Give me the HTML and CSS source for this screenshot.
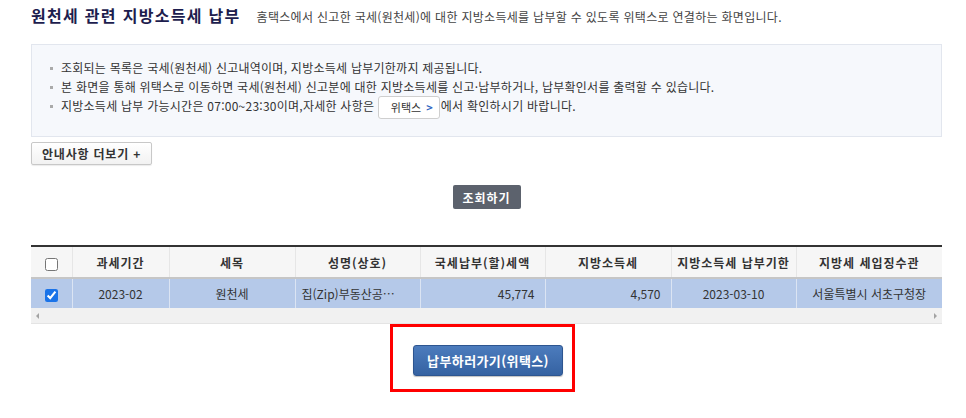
FILE: index.html
```html
<!DOCTYPE html>
<html lang="ko">
<head>
    <meta charset="UTF-8">
    <meta name="viewport" content="width=device-width, initial-scale=1.0">
    <title>원천세 관련 지방소득세 납부</title>
    <link rel="stylesheet" href="styles.css">
</head>
<body>
    <div class="pagina">
        <div class="titulo">
            <h1>원천세 관련 지방소득세 납부</h1>
            <p class="descripcion">홈택스에서 신고한 국세(원천세)에 대한 지방소득세를 납부할 수 있도록 위택스로 연결하는 화면입니다.</p>
        </div>

        <div class="caja-info">
            <ul>
                <li>조회되는 목록은 국세(원천세) 신고내역이며, 지방소득세 납부기한까지 제공됩니다.</li>
                <li>본 화면을 통해 위택스로 이동하면 국세(원천세) 신고분에 대한 지방소득세를 신고·납부하거나, 납부확인서를 출력할 수 있습니다.</li>
                <li>지방소득세 납부 가능시간은 07:00~23:30이며,자세한 사항은 <a class="btn-wetax" href="#">위택스 <span class="flecha">&gt;</span></a>에서 확인하시기 바랍니다.</li>
            </ul>
        </div>

        <button class="btn-mas">안내사항 더보기 +</button>

        <div class="centro">
            <button class="btn-buscar">조회하기</button>
        </div>

        <div class="tabla-wrap">
            <table class="tabla">
                <colgroup>
                    <col style="width:41px">
                    <col style="width:97px">
                    <col style="width:126px">
                    <col style="width:125px">
                    <col style="width:125px">
                    <col style="width:126px">
                    <col style="width:125px">
                    <col style="width:146px">
                </colgroup>
                <thead>
                    <tr>
                        <th><input type="checkbox"></th>
                        <th>과세기간</th>
                        <th>세목</th>
                        <th>성명(상호)</th>
                        <th>국세납부(할)세액</th>
                        <th>지방소득세</th>
                        <th>지방소득세 납부기한</th>
                        <th>지방세 세입징수관</th>
                    </tr>
                </thead>
                <tbody>
                    <tr class="seleccionada">
                        <td><input type="checkbox" checked></td>
                        <td>2023-02</td>
                        <td>원천세</td>
                        <td class="izq">집(Zip)부동산공…</td>
                        <td class="der">45,774</td>
                        <td class="der">4,570</td>
                        <td>2023-03-10</td>
                        <td>서울특별시 서초구청장</td>
                    </tr>
                </tbody>
            </table>
            <div class="scroll">
                <span class="tri-izq"></span>
                <span class="tri-der"></span>
            </div>
        </div>

        <div class="centro pie">
            <div class="marco-rojo">
                <button class="btn-pagar">납부하러가기(위택스)</button>
            </div>
        </div>
    </div>
</body>
</html>
```

FILE: styles.css
```css
* {
    margin: 0;
    padding: 0;
    box-sizing: border-box;
    font-family: "Noto Sans CJK KR", "Liberation Sans", sans-serif;
}

body {
    background: #ffffff;
    color: #333333;
}

.pagina {
    width: 911px;
    margin-left: 31px;
}

.titulo {
    display: flex;
    align-items: baseline;
    gap: 16px;
    padding-top: 4px;
    height: 44px;
}

h1 {
    font-size: 16px;
    line-height: 22px;
    font-weight: 700;
    color: #1d1d4e;
    letter-spacing: 1.3px;
}

.descripcion {
    font-size: 12px;
    color: #444444;
    letter-spacing: 0.3px;
}

.caja-info {
    background: #f6f8fc;
    border: 1px solid #e2e6ee;
    height: 93px;
    padding: 13px 16px 0 17px;
}

.caja-info ul {
    list-style: none;
}

.caja-info li {
    position: relative;
    padding-left: 12px;
    font-size: 12px;
    line-height: 19px;
    letter-spacing: 0.25px;
    color: #333333;
}

.caja-info li::before {
    content: "";
    position: absolute;
    left: 1px;
    top: 9px;
    width: 3px;
    height: 3px;
    background: #aaaaaa;
}

.btn-wetax {
    display: inline-block;
    height: 23px;
    line-height: 21px;
    padding: 0 6px 0 12px;
    margin-right: 1px;
    border: 1px solid #cfcfcf;
    border-radius: 3px;
    background: #ffffff;
    color: #333333;
    text-decoration: none;
    font-size: 11px;
    letter-spacing: 0;
    vertical-align: middle;
}

.flecha {
    color: #2f66c2;
    font-weight: 700;
    margin-left: 2px;
}

.btn-mas {
    display: block;
    margin-top: 5px;
    width: 121px;
    height: 23px;
    border: 1px solid #c8c8c8;
    border-radius: 2px;
    background: linear-gradient(#ffffff, #f2f2f2);
    box-shadow: 0 1px 1px rgba(0,0,0,0.08);
    font-size: 12px;
    font-weight: 700;
    color: #333333;
    letter-spacing: 0.8px;
}

.centro {
    display: flex;
    justify-content: center;
}

.btn-buscar {
    margin-top: 20px;
    width: 68px;
    height: 24px;
    border: none;
    border-radius: 2px;
    background: #5c626d;
    color: #ffffff;
    font-size: 12px;
    font-weight: 700;
    letter-spacing: 1px;
}

.tabla-wrap {
    margin-top: 36px;
    border-top: 2px solid #333333;
}

.tabla {
    width: 911px;
    border-collapse: collapse;
    table-layout: fixed;
}

.tabla th {
    height: 31px;
    background: #f6f6f6;
    border-left: 1px solid #e6e6e6;
    border-bottom: 2px solid #c6c6c6;
    font-size: 12px;
    font-weight: 700;
    color: #333333;
    letter-spacing: 1px;
    text-align: center;
}

.tabla td {
    height: 30px;
    background: #b5c9e9;
    border-left: 1px solid #dbe4f3;
    font-size: 12px;
    color: #333333;
    text-align: center;
    letter-spacing: 0;
}

.tabla th:first-child,
.tabla td:first-child {
    border-left: none;
}

.tabla td.izq {
    text-align: left;
    padding-left: 6px;
}

.tabla td.der {
    text-align: right;
    padding-right: 10px;
}

.tabla input[type="checkbox"] {
    width: 13px;
    height: 13px;
    vertical-align: middle;
    accent-color: #1a73e8;
}

.scroll {
    display: flex;
    justify-content: space-between;
    align-items: center;
    height: 16px;
    padding: 0 5px;
    background: #f1f1f1;
    border-bottom: 1px solid #e4e4e4;
}

.tri-izq {
    width: 0;
    height: 0;
    border-top: 3px solid transparent;
    border-bottom: 3px solid transparent;
    border-right: 3px solid #a3a3a3;
}

.tri-der {
    width: 0;
    height: 0;
    border-top: 3px solid transparent;
    border-bottom: 3px solid transparent;
    border-left: 3px solid #a3a3a3;
}

.pie {
    padding-right: 8px;
}

.marco-rojo {
    border: 3px solid #ff0000;
    padding: 18px 9px 13px 20px;
}

.btn-pagar {
    display: block;
    width: 150px;
    height: 31px;
    border: 1px solid #2d5590;
    border-radius: 3px;
    background: linear-gradient(#4c7cbd, #3562a2);
    box-shadow: 0 1px 1px rgba(0,0,0,0.25);
    color: #ffffff;
    font-size: 13px;
    font-weight: 700;
    letter-spacing: 0.4px;
}
```
